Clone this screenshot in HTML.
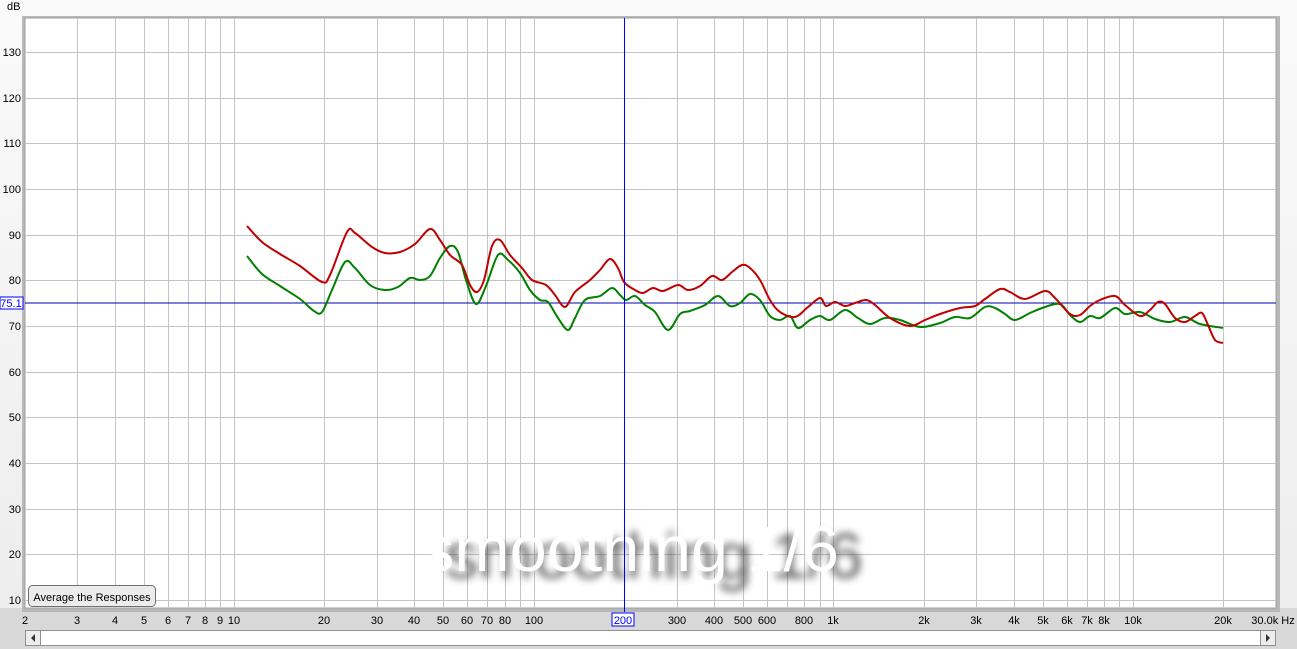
<!DOCTYPE html>
<html><head><meta charset="utf-8"><style>
html,body{margin:0;padding:0;width:1297px;height:649px;overflow:hidden;background:#f0f0f0;font-family:"Liberation Sans",sans-serif}
svg text{font-family:"Liberation Sans",sans-serif}
</style></head><body>
<svg width="1297" height="649" viewBox="0 0 1297 649" xmlns="http://www.w3.org/2000/svg">
<defs>
<linearGradient id="bg" x1="0" y1="0" x2="0" y2="1"><stop offset="0" stop-color="#fafafa"/><stop offset="1" stop-color="#ececec"/></linearGradient>
<filter id="bl" x="-10%" y="-30%" width="120%" height="160%"><feGaussianBlur stdDeviation="4"/></filter>
</defs>
<rect width="1297" height="649" fill="url(#bg)"/>
<rect x="0" y="608" width="1297" height="41" fill="#d8d8d8"/>
<rect x="22" y="16" width="1258" height="596" fill="#b8b8b8"/>
<rect x="25" y="18" width="1251" height="590" fill="#fff" stroke="#a0a0a0"/>
<g id="grid" stroke="#c4c4c4" stroke-width="1"></g>
<g font-size="11" fill="#000" text-anchor="end">
<text x="7" y="10" text-anchor="start">dB</text>
<text x="21" y="56">130</text><text x="21" y="102">120</text><text x="21" y="147">110</text><text x="21" y="193">100</text><text x="21" y="239">90</text><text x="21" y="284">80</text><text x="21" y="330">70</text><text x="21" y="376">60</text><text x="21" y="421">50</text><text x="21" y="467">40</text><text x="21" y="513">30</text><text x="21" y="558">20</text><text x="21" y="604">10</text>
</g>
<g font-size="11" fill="#000" text-anchor="middle">
<text x="25" y="624">2</text><text x="77" y="624">3</text><text x="115" y="624">4</text><text x="144" y="624">5</text><text x="168" y="624">6</text><text x="188" y="624">7</text><text x="205" y="624">8</text><text x="220" y="624">9</text><text x="234" y="624">10</text>
<text x="324" y="624">20</text><text x="377" y="624">30</text><text x="414" y="624">40</text><text x="443" y="624">50</text><text x="467" y="624">60</text><text x="487" y="624">70</text><text x="505" y="624">80</text><text x="534" y="624">100</text>
<text x="677" y="624">300</text><text x="714" y="624">400</text><text x="743" y="624">500</text><text x="767" y="624">600</text><text x="804" y="624">800</text><text x="833" y="624">1k</text>
<text x="924" y="624">2k</text><text x="976" y="624">3k</text><text x="1014" y="624">4k</text><text x="1043" y="624">5k</text><text x="1067" y="624">6k</text><text x="1087" y="624">7k</text><text x="1104" y="624">8k</text><text x="1133" y="624">10k</text><text x="1223" y="624">20k</text>
<text x="1273" y="624">30.0k Hz</text>
</g>
<line x1="25" y1="303" x2="1276" y2="303" stroke="#0000b0"/>
<rect x="0" y="297" width="23" height="12" fill="#fff" stroke="#0000ff"/>
<text x="11" y="307" font-size="11" fill="#0000ff" text-anchor="middle">75.1</text>
<g font-size="64">
<text x="445" y="578" fill="#444" filter="url(#bl)" opacity="0.85" textLength="418" lengthAdjust="spacingAndGlyphs">smoothing 1/6</text>
<text x="421" y="571" fill="#fff" textLength="418" lengthAdjust="spacingAndGlyphs">smoothing 1/6</text>
</g>
<path class="cv" fill="none" stroke="#008000" stroke-width="2" stroke-linejoin="round" data-p="247,256 262,274 280,286 300,299 314,311 322,312 332,290 345,262 355,268 370,285 385,290 398,287 410,278 420,280 430,276 440,258 450,246 458,252 466,280 476,304 486,286 498,255 508,260 520,273 530,290 540,300 548,302 558,318 568,330 575,318 585,300 600,296 612,288 620,295 626,300 635,296 645,305 655,312 668,330 680,314 690,311 705,305 718,296 730,306 740,303 750,294 760,300 770,316 780,320 790,316 798,328 810,320 820,316 830,320 845,310 858,318 870,324 885,318 900,320 920,327 940,323 955,317 970,318 985,307 995,308 1005,314 1015,320 1030,313 1045,307 1060,304 1070,315 1080,322 1090,316 1100,318 1115,308 1125,314 1140,312 1155,319 1170,322 1185,317 1200,324 1223,328"/>
<path class="cv" fill="none" stroke="#c00000" stroke-width="2" stroke-linejoin="round" data-p="247,226 262,242 280,254 300,266 322,282 330,275 347,232 355,233 372,247 385,253 400,252 415,244 430,229 440,240 450,255 462,265 470,285 477,292 484,280 492,246 500,240 510,255 522,268 532,280 546,285 555,295 565,307 575,292 590,280 600,270 610,259 618,268 624,282 635,290 643,293 653,288 663,291 678,285 688,290 700,286 712,276 722,280 732,272 742,265 750,268 760,280 770,300 780,312 795,317 808,307 820,298 826,306 835,302 845,306 855,303 866,300 875,305 890,318 910,326 925,320 940,314 960,308 975,306 985,299 1000,289 1010,292 1025,299 1045,291 1055,298 1070,314 1080,315 1090,306 1100,300 1115,296 1125,305 1140,316 1150,310 1158,302 1165,304 1175,318 1185,322 1195,316 1202,313 1208,325 1215,340 1223,343"/>
<line x1="624.5" y1="18" x2="624.5" y2="612" stroke="#0000ff"/>
<rect x="612" y="613" width="22" height="13" fill="#fff" stroke="#0000ff"/>
<text x="623" y="624" font-size="11" fill="#0000ff" text-anchor="middle">200</text>
<rect x="28.5" y="585.5" width="127" height="21" rx="4" fill="#ececec" stroke="#707070"/>
<text x="92" y="601" font-size="11" fill="#000" text-anchor="middle">Average the Responses</text>
<rect x="25.5" y="630.5" width="1250" height="15" fill="#fff" stroke="#909090"/>
<rect x="25.5" y="630.5" width="15" height="15" fill="#ececec" stroke="#909090"/>
<rect x="1260.5" y="630.5" width="15" height="15" fill="#ececec" stroke="#909090"/>
<path d="M35,634 L31,638 L35,642Z" fill="#333"/>
<path d="M1266,634 L1270,638 L1266,642Z" fill="#333"/>
</svg>
<script>
var g=document.getElementById('grid'),ns='http://www.w3.org/2000/svg';
function L(a,b,c,d){var l=document.createElementNS(ns,'line');l.setAttribute('x1',a);l.setAttribute('y1',b);l.setAttribute('x2',c);l.setAttribute('y2',d);g.appendChild(l);}
for(var v=10;v<=130;v+=10){var y=Math.round(52+(130-v)*4.567)+0.5;L(25,y,1276,y);}
for(var d2=1;d2<=10000;d2*=10)for(var k=1;k<=9;k++){var f=k*d2;if(f>=2&&f<=20000){var x=Math.round(234+299.7*Math.log10(f/10))+0.5;if(x>26)L(x,18,x,608);}}
document.querySelectorAll('.cv').forEach(function(el){
var p=el.getAttribute('data-p').trim().split(/\s+/).map(function(s){return s.split(',').map(Number)});
var d='M'+p[0][0]+','+p[0][1];
for(var i=0;i<p.length-1;i++){var p0=p[i-1]||p[i],p1=p[i],p2=p[i+1],p3=p[i+2]||p2;
var c1x=p1[0]+(p2[0]-p0[0])/6,c1y=p1[1]+(p2[1]-p0[1])/6,c2x=p2[0]-(p3[0]-p1[0])/6,c2y=p2[1]-(p3[1]-p1[1])/6;
d+=' C'+c1x.toFixed(1)+','+c1y.toFixed(1)+' '+c2x.toFixed(1)+','+c2y.toFixed(1)+' '+p2[0]+','+p2[1];}
el.setAttribute('d',d);});
</script>
</body></html>
